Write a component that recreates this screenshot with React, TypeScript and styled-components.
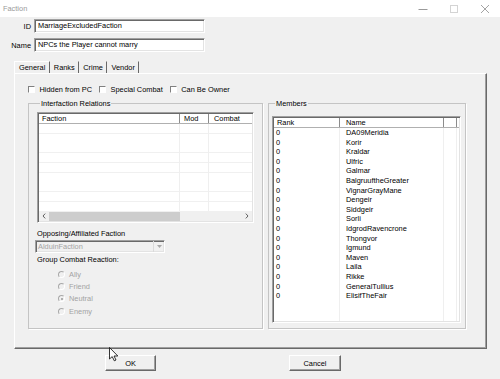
import React from "react";
import styled, { createGlobalStyle } from "styled-components";

const Global = createGlobalStyle`
  html, body { margin: 0; padding: 0; background: #f0f0f0; }
  * { box-sizing: border-box; }
  body {
    font-family: "Liberation Sans", Arial, sans-serif;
    font-size: 7.4px;
    color: #000;
  }
`;

const Window = styled.div`
  position: relative;
  width: 500px;
  height: 379px;
  background: #f0f0f0;
  display: flex;
  flex-direction: column;
  overflow: hidden;
`;

const TitleBar = styled.div`
  height: 17px;
  flex: none;
  background: #fff;
  display: flex;
  align-items: center;
  padding-left: 3px;
  color: #9a9a9a;
`;

const Title = styled.span`
  flex: 1;
  line-height: 9px;
`;

const Controls = styled.div`
  display: flex;
  height: 100%;
`;

const CtrlBtn = styled.div`
  width: 31px;
  height: 100%;
  display: flex;
  align-items: center;
  justify-content: center;
`;

const Body = styled.div`
  flex: 1;
  display: flex;
  flex-direction: column;
  padding-top: 2px;
`;

const Fields = styled.div`
  display: flex;
  flex-direction: column;
  gap: 5px;
`;

const FieldRow = styled.div`
  display: grid;
  grid-template-columns: 31px 171px;
  column-gap: 3px;
  align-items: center;
  height: 14px;
`;

const FieldLabel = styled.label`
  text-align: right;
  line-height: 9px;
`;

const sunken = `
  border: 1px solid;
  border-color: #a0a0a0 #ffffff #ffffff #a0a0a0;
  box-shadow: inset 1px 1px 0 #696969, inset -1px -1px 0 #e3e3e3;
`;

const TextBox = styled.div`
  height: 14px;
  ${sunken}
  background: #fff;
  padding: 0 0 0 3px;
  line-height: 12px;
  white-space: nowrap;
  overflow: hidden;
`;

const TabStrip = styled.div`
  display: flex;
  height: 12px;
  margin: 9px 0 0 14px;
`;

const Tab = styled.div<{ $active?: boolean }>`
  height: 12px;
  padding: 0 3.5px 0 ${(p) => (p.$active ? "4px" : "3px")};
  line-height: 12px;
  border-right: 1px solid #696969;
  border-top: 1px solid ${(p) => (p.$active ? "#fff" : "transparent")};
  border-left: 1px solid ${(p) => (p.$active ? "#fff" : "transparent")};
  white-space: nowrap;
`;

const Panel = styled.div`
  width: 473px;
  height: 276px;
  margin-left: 14px;
  border: 1px solid;
  border-color: #fff #696969 #696969 #fff;
  box-shadow: inset -1px -1px 0 #a0a0a0;
  padding: 11px 0 0 13px;
  display: flex;
  flex-direction: column;
`;

const CheckRow = styled.div`
  display: flex;
  align-items: center;
  height: 8px;
  gap: 7px;
`;

const CheckItem = styled.label`
  display: flex;
  align-items: center;
  gap: 4.5px;
  line-height: 9px;
  white-space: nowrap;
`;

const CheckBox = styled.span`
  width: 7px;
  height: 7px;
  border: 1px solid;
  border-color: #808080 #ffffff #ffffff #808080;
  background: #fff;
`;

const GroupRow = styled.div`
  display: flex;
  gap: 5px;
  margin-top: 6px;
`;

const GroupBox = styled.fieldset<{ $w: number; $pad: number }>`
  width: ${(p) => p.$w}px;
  height: 230px;
  min-width: 0;
  margin: 0;
  padding: 0 0 0 ${(p) => p.$pad}px;
  border: 1px solid #c4c4c4;
  box-shadow: 1px 1px 0 #fff;
  display: flex;
  flex-direction: column;
  align-items: flex-start;
`;

const Legend = styled.legend<{ $ml: number }>`
  padding: 0 1px;
  margin-left: ${(p) => p.$ml}px;
  line-height: 9px;
`;

const ListBox = styled.div<{ $w: number; $h: number; $mt: number; $ml: number }>`
  width: ${(p) => p.$w}px;
  height: ${(p) => p.$h}px;
  margin: ${(p) => p.$mt}px 0 0 ${(p) => p.$ml}px;
  flex: none;
  ${sunken}
  padding: 1px;
  background: #fff;
  display: flex;
  flex-direction: column;
  overflow: hidden;
`;

const HeaderRow = styled.div<{ $cols: string }>`
  display: grid;
  grid-template-columns: ${(p) => p.$cols};
  height: 10px;
  flex: none;
  border-bottom: 1px solid #b0b0b0;
  background: #fff;
`;

const HeaderCell = styled.div<{ $pad: number; $last?: boolean }>`
  padding-left: ${(p) => p.$pad}px;
  line-height: 9px;
  border-right: 1px solid ${(p) => (p.$last ? "transparent" : "#8c8c8c")};
  white-space: nowrap;
  overflow: hidden;
`;

const GridBody = styled.div<{ $cols: string; $lines?: boolean }>`
  flex: 1;
  display: grid;
  grid-template-columns: ${(p) => p.$cols};
  background: ${(p) =>
    p.$lines
      ? "repeating-linear-gradient(to bottom, transparent 0px, transparent 9px, #f0f0f0 9px, #f0f0f0 9.7px)"
      : "#fff"};
`;

const BodyCol = styled.div<{ $pad: number; $last?: boolean }>`
  padding-left: ${(p) => p.$pad}px;
  border-right: 1px solid ${(p) => (p.$last ? "transparent" : "#efefef")};
  display: flex;
  flex-direction: column;
  white-space: nowrap;
  overflow: hidden;
`;

const Cell = styled.div`
  height: 9.6px;
  line-height: 9.6px;
`;

const HScroll = styled.div`
  height: 10px;
  flex: none;
  display: flex;
  background: #f0f0f0;
`;

const ScrollArrow = styled.div`
  width: 10px;
  height: 10px;
  display: flex;
  align-items: center;
  justify-content: center;
`;

const ScrollTrack = styled.div`
  flex: 1;
  display: flex;
  align-items: center;
`;

const ScrollThumb = styled.div`
  width: 131px;
  height: 9px;
  background: #cdcdcd;
`;

const SmallLabel = styled.div<{ $mt: number }>`
  margin-top: ${(p) => p.$mt}px;
  padding-left: 2px;
  line-height: 9px;
  white-space: nowrap;
`;

const Combo = styled.div`
  margin-top: 2px;
  width: 130px;
  height: 13px;
  ${sunken}
  background: #f0f0f0;
  display: flex;
`;

const ComboText = styled.div`
  flex: 1;
  padding-left: 2px;
  line-height: 11px;
  color: #a3a3a3;
`;

const ComboBtn = styled.div`
  width: 11px;
  border-left: 1px solid #dadada;
  display: flex;
  align-items: center;
  justify-content: center;
`;

const RadioGroup = styled.div`
  margin-top: 4px;
  padding-left: 23px;
  display: flex;
  flex-direction: column;
`;

const RadioRow = styled.div`
  height: 12.3px;
  display: flex;
  align-items: center;
  gap: 4px;
  color: #a3a3a3;
`;

const RadioDot = styled.span<{ $on?: boolean }>`
  width: 7px;
  height: 7px;
  border-radius: 50%;
  border: 1px solid;
  border-color: #a8a8a8 #ffffff #ffffff #a8a8a8;
  background: #f0f0f0;
  display: flex;
  align-items: center;
  justify-content: center;
  &::after {
    content: "";
    width: 2px;
    height: 2px;
    border-radius: 50%;
    background: ${(p) => (p.$on ? "#9a9a9a" : "transparent")};
  }
`;

const ButtonRow = styled.div`
  display: flex;
  gap: 133px;
  margin-top: 6px;
  padding-left: 105px;
`;

const Button = styled.div<{ $w: number }>`
  width: ${(p) => p.$w}px;
  height: 16px;
  border: 1px solid;
  border-color: #fff #696969 #696969 #fff;
  box-shadow: inset -1px -1px 0 #a0a0a0;
  display: flex;
  align-items: center;
  justify-content: center;
  line-height: 9px;
`;

const Cursor = styled.svg`
  position: absolute;
  left: 109px;
  top: 347px;
`;

const members = [
  "DA09Meridia",
  "Korir",
  "Kraldar",
  "Ulfric",
  "Galmar",
  "BalgruuftheGreater",
  "VignarGrayMane",
  "Dengeir",
  "Siddgeir",
  "Sorli",
  "IdgrodRavencrone",
  "Thongvor",
  "Igmund",
  "Maven",
  "Laila",
  "Rikke",
  "GeneralTullius",
  "ElisifTheFair",
];

const relCols = "141px 29px 43px";
const memCols = "66px 104px 13px 1fr";

export default function App() {
  return (
    <Window>
      <Global />
      <TitleBar>
        <Title>Faction</Title>
        <Controls>
          <CtrlBtn>
            <svg width="10" height="10" viewBox="0 0 10 10">
              <line x1="0.5" y1="5.5" x2="9.5" y2="5.5" stroke="#9a9a9a" strokeWidth="1" />
            </svg>
          </CtrlBtn>
          <CtrlBtn>
            <svg width="10" height="10" viewBox="0 0 10 10">
              <rect x="1.5" y="1.5" width="7" height="7" fill="none" stroke="#d4d4d4" strokeWidth="1" />
            </svg>
          </CtrlBtn>
          <CtrlBtn>
            <svg width="10" height="10" viewBox="0 0 10 10">
              <path d="M1 1 L9 9 M9 1 L1 9" stroke="#9a9a9a" strokeWidth="0.9" />
            </svg>
          </CtrlBtn>
        </Controls>
      </TitleBar>
      <Body>
        <Fields>
          <FieldRow>
            <FieldLabel>ID</FieldLabel>
            <TextBox>MarriageExcludedFaction</TextBox>
          </FieldRow>
          <FieldRow>
            <FieldLabel>Name</FieldLabel>
            <TextBox>NPCs the Player cannot marry</TextBox>
          </FieldRow>
        </Fields>
        <TabStrip>
          <Tab $active>General</Tab>
          <Tab>Ranks</Tab>
          <Tab>Crime</Tab>
          <Tab>Vendor</Tab>
        </TabStrip>
        <Panel>
          <CheckRow>
            <CheckItem>
              <CheckBox />
              Hidden from PC
            </CheckItem>
            <CheckItem>
              <CheckBox />
              Special Combat
            </CheckItem>
            <CheckItem>
              <CheckBox />
              Can Be Owner
            </CheckItem>
          </CheckRow>
          <GroupRow>
            <GroupBox $w={235} $pad={6}>
              <Legend $ml={5}>Interfaction Relations</Legend>
              <ListBox $w={217} $h={111} $mt={4} $ml={2}>
                <HeaderRow $cols={relCols}>
                  <HeaderCell $pad={3}>Faction</HeaderCell>
                  <HeaderCell $pad={4}>Mod</HeaderCell>
                  <HeaderCell $pad={5} $last>Combat</HeaderCell>
                </HeaderRow>
                <GridBody $cols={relCols} $lines>
                  <BodyCol $pad={0} />
                  <BodyCol $pad={0} />
                  <BodyCol $pad={0} $last />
                </GridBody>
                <HScroll>
                  <ScrollArrow>
                    <svg width="4" height="6" viewBox="0 0 4 6">
                      <path d="M3.2 0.6 L1 3 L3.2 5.4" fill="none" stroke="#606060" strokeWidth="1" />
                    </svg>
                  </ScrollArrow>
                  <ScrollTrack>
                    <ScrollThumb />
                  </ScrollTrack>
                  <ScrollArrow>
                    <svg width="4" height="6" viewBox="0 0 4 6">
                      <path d="M0.8 0.6 L3 3 L0.8 5.4" fill="none" stroke="#606060" strokeWidth="1" />
                    </svg>
                  </ScrollArrow>
                </HScroll>
              </ListBox>
              <SmallLabel $mt={6}>Opposing/Affiliated Faction</SmallLabel>
              <Combo>
                <ComboText>AlduinFaction</ComboText>
                <ComboBtn>
                  <svg width="5" height="3" viewBox="0 0 5 3">
                    <path d="M0 0 H5 L2.5 3 Z" fill="#a8a8a8" />
                  </svg>
                </ComboBtn>
              </Combo>
              <SmallLabel $mt={2}>Group Combat Reaction:</SmallLabel>
              <RadioGroup>
                <RadioRow>
                  <RadioDot />
                  Ally
                </RadioRow>
                <RadioRow>
                  <RadioDot />
                  Friend
                </RadioRow>
                <RadioRow>
                  <RadioDot $on />
                  Neutral
                </RadioRow>
                <RadioRow>
                  <RadioDot />
                  Enemy
                </RadioRow>
              </RadioGroup>
            </GroupBox>
            <GroupBox $w={198} $pad={3}>
              <Legend $ml={3}>Members</Legend>
              <ListBox $w={189} $h={207} $mt={8} $ml={0}>
                <HeaderRow $cols={memCols}>
                  <HeaderCell $pad={3}>Rank</HeaderCell>
                  <HeaderCell $pad={6}>Name</HeaderCell>
                  <HeaderCell $pad={0}></HeaderCell>
                  <HeaderCell $pad={0} $last></HeaderCell>
                </HeaderRow>
                <GridBody $cols={memCols}>
                  <BodyCol $pad={2}>
                    {members.map((m) => (
                      <Cell key={m}>0</Cell>
                    ))}
                  </BodyCol>
                  <BodyCol $pad={6}>
                    {members.map((m) => (
                      <Cell key={m}>{m}</Cell>
                    ))}
                  </BodyCol>
                  <BodyCol $pad={0} />
                  <BodyCol $pad={0} $last />
                </GridBody>
              </ListBox>
            </GroupBox>
          </GroupRow>
        </Panel>
        <ButtonRow>
          <Button $w={51}>OK</Button>
          <Button $w={52}>Cancel</Button>
        </ButtonRow>
      </Body>
      <Cursor width="11" height="15" viewBox="0 0 11 15">
        <path
          d="M0.5 0.5 V12 L3.2 9.6 L5.3 13.8 L7 13 L5 9 H8.8 Z"
          fill="#fff"
          stroke="#000"
          strokeWidth="0.8"
          strokeLinejoin="round"
        />
      </Cursor>
    </Window>
  );
}
